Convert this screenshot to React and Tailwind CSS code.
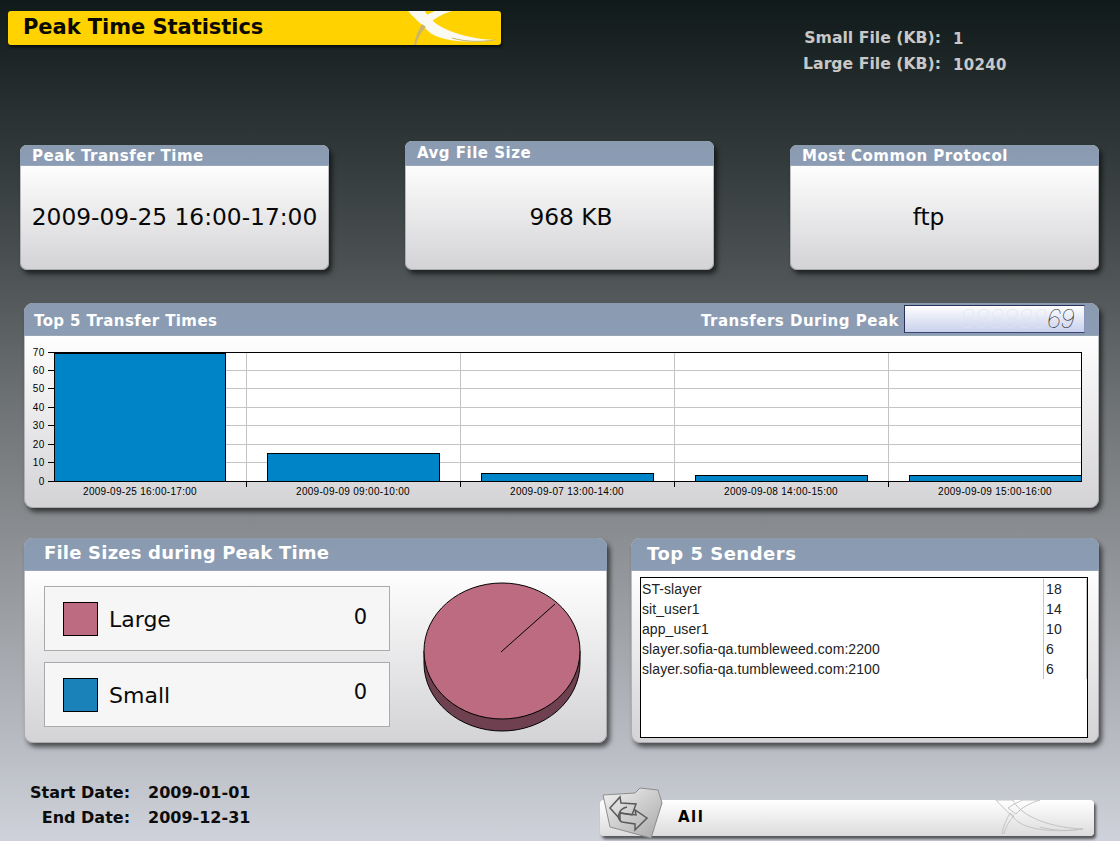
import React from "react";

const sans = "font-['DejaVu_Sans',sans-serif]";
const arial = "font-['Liberation_Sans',Arial,sans-serif]";

const cards = [
  { title: "Peak Transfer Time", value: "2009-09-25 16:00-17:00", height: "h-[125px]", head: "h-[21px] leading-[23px]", shift: "" },
  { title: "Avg File Size", value: "968 KB", height: "h-[129px]", head: "h-[25px] leading-[25px]", shift: "pl-[23px]" },
  { title: "Most Common Protocol", value: "ftp", height: "h-[125px]", head: "h-[21px] leading-[23px]", shift: "pr-[32px]" },
];

const bars = [
  { label: "2009-09-25 16:00-17:00", value: 69, x: 30.5 },
  { label: "2009-09-09 09:00-10:00", value: 15, x: 243.5 },
  { label: "2009-09-07 13:00-14:00", value: 4, x: 457.5 },
  { label: "2009-09-08 14:00-15:00", value: 3, x: 671.5 },
  { label: "2009-09-09 15:00-16:00", value: 3, x: 885.5 },
];

const senders = [
  ["ST-slayer", 18],
  ["sit_user1", 14],
  ["app_user1", 10],
  ["slayer.sofia-qa.tumbleweed.com:2200", 6],
  ["slayer.sofia-qa.tumbleweed.com:2100", 6],
];

const panelBody = "bg-gradient-to-b from-white from-15% to-[#d3d3d6]";
const panelShadow = "shadow-[inset_0_0_0_1px_rgba(130,130,135,0.5),3px_4px_5px_rgba(0,0,0,0.6)]";
const headBg = "bg-gradient-to-b from-[#8a9bb0] to-[#8b9cb5] border-b border-[#9ba7b6]";

function BarChart() {
  const y = (v) => Math.floor(130 - (v / 70) * 129) + 0.5;
  return (
    <svg width="1075" height="154" className="block overflow-visible">
      <rect x="30.5" y="1.5" width="1027" height="129" fill="#fff" />
      {[10, 20, 30, 40, 50, 60].map((v) => (
        <line key={v} x1="30" x2="1057" y1={y(v)} y2={y(v)} stroke="#c4c4c4" />
      ))}
      {[222.5, 436.5, 650.5, 864.5].map((x) => (
        <g key={x}>
          <line x1={x} x2={x} y1={1} y2={130} stroke="#c4c4c4" />
          <line x1={x} x2={x} y1={130} y2={136} stroke="#000" />
        </g>
      ))}
      <rect x="30.5" y="1.5" width="1027" height="129" fill="none" stroke="#000" />
      {[0, 10, 20, 30, 40, 50, 60, 70].map((v) => (
        <g key={v}>
          <line x1="24" x2="30" y1={y(v)} y2={y(v)} stroke="#000" />
          <text x="20.5" y={y(v) + 3.5} textAnchor="end" fontSize="10" letterSpacing="0.3" fontFamily="Liberation Sans">
            {v}
          </text>
        </g>
      ))}
      {bars.map((b) => (
        <g key={b.label}>
          <rect
            x={b.x}
            y={y(b.value)}
            width={b.value === 69 ? 171 : 172}
            height={130.5 - y(b.value)}
            fill="#0084c8"
            stroke="#000"
          />
          <text x={b.x + 85.5} y="144" textAnchor="middle" fontSize="10" letterSpacing="0.3" fontFamily="Liberation Sans">
            {b.label}
          </text>
        </g>
      ))}
    </svg>
  );
}

function Pie() {
  return (
    <svg width="160" height="152" className="block">
      <path d="M1 69 V81 A78 68 0 0 0 157 81 V69 Z" fill="#6f4050" stroke="#000" />
      <ellipse cx="79" cy="69" rx="78" ry="68" fill="#bc6b80" stroke="#000" />
      <line x1="78" y1="70" x2="132" y2="22" stroke="#000" />
    </svg>
  );
}

function Swoosh({ light }) {
  const main = light ? "none" : "#fbfaf2";
  const line = light ? "#c4c4c4" : "none";
  const tail = light ? "#c4c4c4" : "#c9b56c";
  return (
    <svg width="96" height="34" viewBox="0 0 96 34" className="block">
      <path d="M0 0 H17 C22 12 45 27 87 29 C60 33 30 30 20 20 C12 12 5 6 0 0 Z" fill={main} stroke={line} />
      <path d="M27 0 H44 C34 3 25 8 20 14 L12 8 C16 5 22 2 27 0 Z" fill={main} stroke={line} />
      <path d="M14 13 C10 20 7 27 6 34 L8 34 C10 26 14 20 18 16 Z" fill={light ? "none" : tail} stroke={line} />
      <path d="M44 27 C58 31 72 31 87 29" fill="none" stroke={tail} strokeWidth="1" />
    </svg>
  );
}

function FolderIcon() {
  return (
    <svg width="70" height="56" viewBox="0 0 70 56" className="block">
      <defs>
        <linearGradient id="fold" x1="0" y1="0" x2="1" y2="1">
          <stop offset="0" stopColor="#f2f2f2" />
          <stop offset="1" stopColor="#a8a8a8" />
        </linearGradient>
      </defs>
      <path d="M60 6 L66 19 L55 54 L50 50 Z" fill="#8c8c8c" />
      <path d="M7 11 L39 9 L44 4 L62 6 L66 19 L55 54 L14 43 Z" fill="url(#fold)" stroke="#8d8d8d" />
      <path d="M14 24 L24 13 L25 19 L40 20 L36 31 L24 29 L24 35 Z" fill="none" stroke="#5a5a5a" strokeWidth="1.5" />
      <path
        d="M24 29 L40 31 L39 26 L51 34 L39 46 L39 40 L26 38 C20 35 22 25 31 23"
        fill="none"
        stroke="#5a5a5a"
        strokeWidth="1.5"
      />
    </svg>
  );
}

export default function App() {
  return (
    <div className={`h-[841px] w-[1120px] overflow-hidden bg-gradient-to-b from-[#111a1a] from-0% via-[#727678] via-50% to-[#cfd2da] ${sans}`}>
      <div className="flex h-[141px] items-start justify-between">
        <div className="relative ml-2 mt-[11px] flex h-[34px] w-[493px] items-center overflow-hidden rounded-[3px] bg-[#ffd200] pl-[15px] shadow-[1px_2px_3px_rgba(0,0,0,0.7)]">
          <span className="text-[21px] font-bold tracking-[-0.05px] text-[#0a0a00]">Peak Time Statistics</span>
          <div className="absolute left-[400px] top-0">
            <Swoosh />
          </div>
        </div>
        <div className="mr-[113px] mt-[28px] grid grid-cols-[auto_54px] gap-x-3 gap-y-[5px] text-[15.7px] font-bold leading-[20px] text-[#c8c8c8]">
          <span className="text-right">Small File (KB):</span>
          <span className="mt-[1px] text-[15px]">1</span>
          <span className="text-right">Large File (KB):</span>
          <span className="mt-[1px] text-[15px] tracking-[0.3px]">10240</span>
        </div>
      </div>

      <div className="ml-5 flex h-[129px] items-end gap-[76px]">
        {cards.map((c) => (
          <div key={c.title} className={`flex w-[309px] flex-col overflow-hidden rounded-[7px] ${panelBody} ${panelShadow} ${c.height}`}>
            <div className={`${headBg} ${c.head} shrink-0 pl-[12px] text-[15px] font-bold tracking-[0.5px] text-white`}>
              {c.title}
            </div>
            <div className={`-mt-[2px] flex flex-1 items-center justify-center text-[23.3px] text-[#080808] ${c.shift}`}>{c.value}</div>
          </div>
        ))}
      </div>

      <div className={`ml-6 mt-[33px] h-[205px] w-[1075px] overflow-hidden rounded-[9px] ${panelBody} ${panelShadow}`}>
        <div className={`${headBg} flex h-[33px] items-center justify-between pl-[10px] pr-[14px] text-[15px] font-bold tracking-[0.4px] text-white`}>
          <span className="mt-[5px]">Top 5 Transfer Times</span>
          <div className="flex items-center gap-[5px]">
            <span className="mt-[5px] tracking-[0.5px]">Transfers During Peak</span>
            <div className="flex h-[28px] w-[181px] items-center justify-end border border-[#27315c] border-r-[#8a93b8] border-b-[#3a4470] bg-gradient-to-b from-white to-[#c8d0ec] pr-[10px] font-['Inter',sans-serif] text-[26px] font-thin italic leading-none tracking-[-1px]">
              <span className="text-[#dfe3f2]">888888</span>
              <span className="text-[#222]">69</span>
            </div>
          </div>
        </div>
        <div className="pt-[15px]">
          <BarChart />
        </div>
      </div>

      <div className="ml-6 mt-[30px] flex h-[205px] gap-6">
        <div className={`flex w-[583px] flex-col overflow-hidden rounded-[9px] ${panelBody} ${panelShadow}`}>
          <div className={`${headBg} h-[33px] shrink-0 pl-[20px] text-[18px] font-bold leading-[30px] tracking-[0.2px] text-white`}>
            File Sizes during Peak Time
          </div>
          <div className="flex flex-1 items-start pl-5 pt-[15px]">
            <div className="flex w-[346px] flex-col gap-[11px]">
              {[
                { name: "Large", swatch: "bg-[#bc6b80]", zero: "-mt-[1px]" },
                { name: "Small", swatch: "bg-[#1a82b8]", zero: "-mt-[3px]" },
              ].map((row) => (
                <div key={row.name} className="flex h-[65px] items-center border border-[#aaaaaa] bg-[#f6f6f6] pl-[18px] pr-[22px] text-[22px] text-[#0a0a0a]">
                  <div className={`h-[34px] w-[35px] border border-black ${row.swatch}`} />
                  <span className="ml-[11px] mt-[1px] flex-1">{row.name}</span>
                  <span className={`text-[21px] ${row.zero}`}>0</span>
                </div>
              ))}
            </div>
            <div className="ml-[33px] -mt-[4px]">
              <Pie />
            </div>
          </div>
        </div>
        <div className={`flex w-[468px] flex-col overflow-hidden rounded-[9px] ${panelBody} ${panelShadow}`}>
          <div className={`${headBg} h-[33px] shrink-0 pl-[16px] text-[18px] font-bold leading-[32px] tracking-[0.5px] text-white`}>
            Top 5 Senders
          </div>
          <div className={`ml-[9px] mt-[6px] h-[161px] w-[448px] border-[1.5px] border-black bg-white pt-[1px] ${arial} text-[14px] leading-[20px] text-[#222]`}>
            {senders.map(([name, count]) => (
              <div key={name} className="flex h-[20px] items-center">
                <span className="flex-1 pl-[1px] tracking-[0.08px]">{name}</span>
                <span className="h-full w-[44px] border-x border-x-[#c4c4c4] pl-[2px] tracking-[0.1px]">{count}</span>
              </div>
            ))}
          </div>
        </div>
      </div>

      <div className="flex items-start justify-between">
        <div className="ml-[30px] mt-[40px] grid grid-cols-[auto_auto] gap-x-[18px] gap-y-[5px] text-[16px] font-bold leading-[20px] text-[#0c0c0c]">
          <span className="text-right">Start Date:</span>
          <span>2009-01-01</span>
          <span className="text-right">End Date:</span>
          <span>2009-12-31</span>
        </div>
        <div className="relative mr-[26px] mt-[57px] h-[36px] w-[494px] rounded-[4px] bg-gradient-to-b from-white to-[#dcdcdc] shadow-[2px_3px_3px_rgba(0,0,0,0.6)]">
          <div className="absolute -left-[4px] -top-[16px]">
            <FolderIcon />
          </div>
          <span className="absolute left-[78px] top-[6px] text-[15px] font-bold tracking-[1.5px] text-black">All</span>
          <div className="absolute right-[2px] top-0">
            <Swoosh light />
          </div>
        </div>
      </div>
    </div>
  );
}
